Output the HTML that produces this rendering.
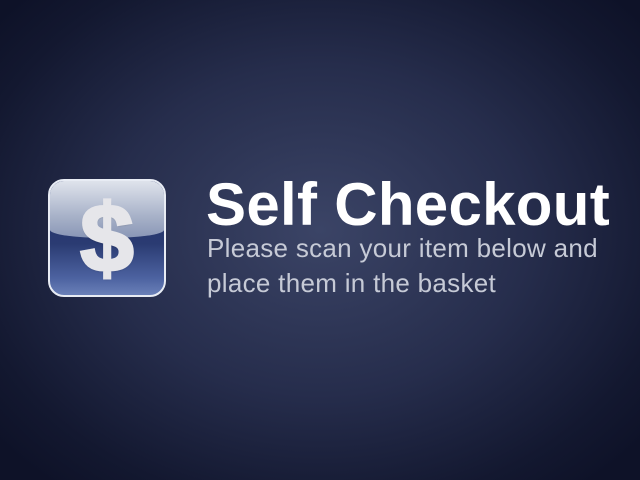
<!DOCTYPE html>
<html><head><style>
html,body{margin:0;width:640px;height:480px;overflow:hidden}
body{background:radial-gradient(ellipse 420px 330px at 320px 230px,#3b4466 0%,#262d4c 50%,#131830 85%,#0e1228 100%);font-family:"Liberation Sans",sans-serif;position:relative}
.icon{position:absolute;left:48px;top:179px;width:114px;height:114px;border:2px solid #e8ecf4;border-radius:16px;overflow:hidden;background:linear-gradient(#1f2f66 0%,#2a3b72 55%,#4c62a0 85%,#6a80b8 100%);box-sizing:content-box}
.gloss{position:absolute;left:0;top:0;width:100%;height:50%;background:linear-gradient(#dfe3ec,#a9b3c9 60%,#8996b6);border-radius:0 0 50% 50%/0 0 8px 8px}
.dollar{position:absolute;left:0;top:8px;width:100%;text-align:center;font-weight:bold;font-size:96px;line-height:100px;color:#e6e6ea;-webkit-text-stroke:3px #e6e6ea;text-shadow:0 1px 2px rgba(0,0,0,.4)}
h1{position:absolute;left:206px;top:170px;margin:0;font-size:60px;font-weight:bold;color:#fff;letter-spacing:0.3px;line-height:70px}
p{position:absolute;left:207px;top:231px;margin:0;font-size:26px;line-height:35px;letter-spacing:0.3px;color:#c6cad6}
</style></head><body>
<div class="icon"><div class="gloss"></div><div class="dollar">$</div></div>
<h1>Self Checkout</h1>
<p>Please scan your item below and<br>place them in the basket</p>
</body></html>
